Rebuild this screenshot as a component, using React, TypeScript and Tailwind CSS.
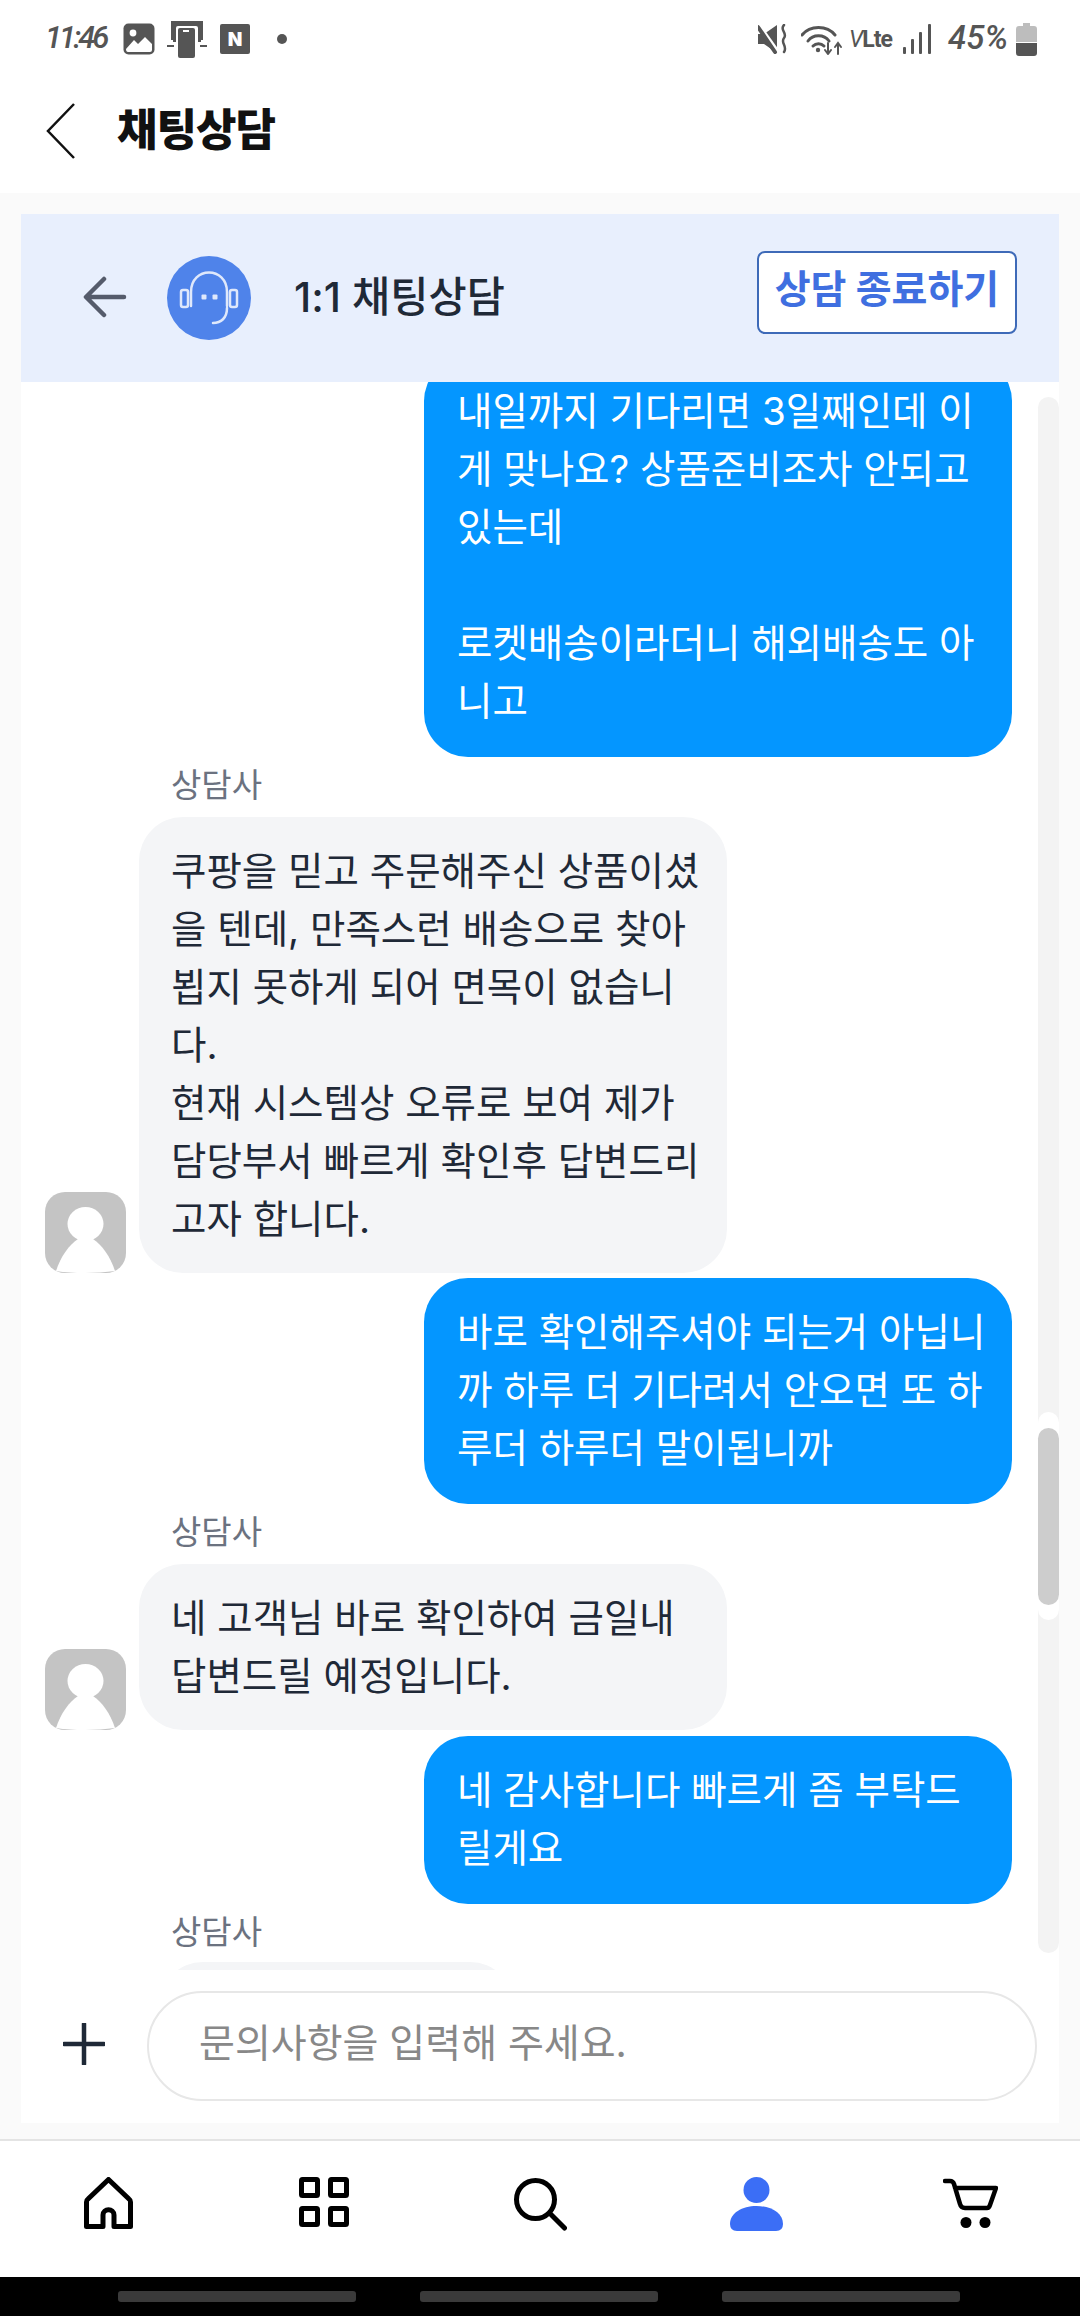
import { ReactNode } from 'react';

function ImageIcon() {
  return (
    <svg width="32" height="32" viewBox="0 0 32 32">
      <rect x="0.5" y="0.5" width="31" height="31" rx="5" fill="#555" />
      <circle cx="10" cy="10" r="3.4" fill="#fff" />
      <path d="M3 26 L11 17 L15 21 L22 14 L29 21 L29 27 Q29 29 27 29 L5 29 Q3 29 3 26Z" fill="#fff" />
    </svg>
  );
}

function DeviceIcon() {
  return (
    <svg width="40" height="37" viewBox="0 0 40 37">
      <path d="M4 0 H36 V19 H34 V21 H6 V19 H4Z" fill="#555" />
      <path d="M0 24 H7 V26 H0Z M33 24 H40 V26 H33Z" fill="#555" />
      <rect x="9" y="5" width="22" height="32" rx="2" fill="#fff" />
      <rect x="11" y="7" width="17" height="30" rx="2" fill="#555" />
      <rect x="16" y="9" width="6" height="2" fill="#fff" />
    </svg>
  );
}

function NIcon() {
  return (
    <div className="w-[30px] h-[30px] rounded-[2px] bg-[#555] flex items-center justify-center text-white text-[19px] leading-none font-black">
      N
    </div>
  );
}

function MuteIcon() {
  return (
    <svg width="30" height="30" viewBox="0 0 30 30">
      <path d="M0 10 H6 L19 1 V29 L6 20 H0Z" fill="#555" />
      <path d="M0 1 L20 29" stroke="#fff" strokeWidth="5" />
      <path d="M0 3 L17 28" stroke="#555" strokeWidth="4" strokeLinecap="round" />
      <path d="M26 1 C21 6 30 9 26 14 C22 19 30 22 26 28" fill="none" stroke="#555" strokeWidth="2.5" strokeLinecap="round" />
    </svg>
  );
}

function WifiIcon() {
  return (
    <svg width="42" height="31" viewBox="0 0 42 31">
      <g fill="none" stroke="#555" strokeWidth="3" strokeLinecap="round">
        <path d="M1 11 C9 1 26 1 34 11" />
        <path d="M7 17 C12 10 23 10 28 17" />
        <path d="M12 22 C15 19 20 19 23 22" />
      </g>
      <circle cx="17" cy="26" r="2.2" fill="#555" />
      <g fill="none" stroke="#555" strokeWidth="2" strokeLinecap="round">
        <path d="M27 19 V30 M24 26 L27 30 L30 26" />
        <path d="M37 30 V19 M34 23 L37 19 L40 23" />
      </g>
    </svg>
  );
}

function SignalIcon() {
  return (
    <svg width="28" height="30" viewBox="0 0 28 30">
      <g fill="#555">
        <rect x="0" y="23" width="3" height="7" rx="1" />
        <rect x="8" y="15" width="3" height="15" rx="1" />
        <rect x="16" y="8" width="3" height="22" rx="1" />
        <rect x="25" y="0" width="3" height="30" rx="1" />
      </g>
    </svg>
  );
}

function BatteryIcon() {
  return (
    <svg width="21" height="33" viewBox="0 0 21 33">
      <path d="M7 0 H14 V3 H18 Q21 3 21 6 V19 H0 V6 Q0 3 3 3 H7Z" fill="#bdbdbd" />
      <path d="M0 20 H21 V30 Q21 33 18 33 H3 Q0 33 0 30Z" fill="#555" />
    </svg>
  );
}

function HeadsetAvatar() {
  return (
    <svg width="84" height="84" viewBox="0 0 84 84">
      <circle cx="42" cy="42" r="42" fill="#4f83ea" />
      <g fill="none" stroke="#dfe8fb" strokeWidth="2.5" strokeLinecap="round">
        <path d="M24 50 V36 C24 10 60 10 60 36 V50" />
        <rect x="14" y="34" width="7" height="17" rx="2" />
        <rect x="63" y="34" width="7" height="17" rx="2" />
        <path d="M60 52 C60 62 54 67 46 67" />
      </g>
      <rect x="34.5" y="38.5" width="5" height="5" rx="1" fill="#dfe8fb" />
      <rect x="45.5" y="38.5" width="5" height="5" rx="1" fill="#dfe8fb" />
    </svg>
  );
}

function AgentAvatar() {
  return (
    <svg width="81" height="81" viewBox="0 0 81 81" className="shrink-0">
      <rect width="81" height="81" rx="20" fill="#c4c4c4" />
      <ellipse cx="40.5" cy="32" rx="18" ry="17" fill="#fff" />
      <path d="M11 79 C16 64 24 53 33 47 H48 C57 53 65 64 70 79 Q56 81 40 81 Q24 81 11 79Z" fill="#fff" />
    </svg>
  );
}

function UserBubble({ lines }: { lines: string[] }) {
  return (
    <div className="self-end w-[588px] mr-[47px] rounded-[44px] bg-[#0496ff] pl-[33px] pt-[25px] pb-[27px] text-white">
      {lines.map((l, i) => (
        <div key={i} className="h-[58px] whitespace-nowrap">{l}</div>
      ))}
    </div>
  );
}

function AgentRow({ lines }: { lines: string[] }) {
  return (
    <div className="flex items-end gap-[13px] pl-[24px]">
      <AgentAvatar />
      <div className="w-[588px] rounded-[44px] bg-[#f4f5f7] px-[32px] py-[25px] text-[#1f2937]">
        {lines.map((l, i) => (
          <div key={i} className="h-[58px] whitespace-nowrap">{l}</div>
        ))}
      </div>
    </div>
  );
}

function AgentLabel() {
  return <div className="h-[60px] pl-[150px] pt-[8px] text-[33px] leading-[40px] text-[#6b7280]">상담사</div>;
}

function NavSlot({ children }: { children: ReactNode }) {
  return <div className="flex items-center justify-center">{children}</div>;
}

export default function App() {
  return (
    <div className="w-[1080px] h-[2316px] flex flex-col bg-white overflow-hidden font-['Inter','Noto_Sans_CJK_KR',sans-serif]">
      {/* status bar */}
      <div className="h-[76px] shrink-0 flex items-center pl-[45px] pr-[43px] pt-[2px] text-[#555]">
        <span className="w-[78px] -mt-[4px] text-[31px] leading-none italic font-medium tracking-[-3px] font-['Roboto',sans-serif]">11:46</span>
        <ImageIcon />
        <div className="ml-[12px]"><DeviceIcon /></div>
        <div className="ml-[13px]"><NIcon /></div>
        <div className="ml-[27px] w-[10px] h-[10px] rounded-full bg-[#555]" />
        <div className="ml-auto flex items-center">
          <MuteIcon />
          <div className="ml-[13px]"><WifiIcon /></div>
          <span className="ml-[6px] w-[46px] text-[23px] leading-none font-bold whitespace-nowrap tracking-[-1px] font-['Roboto',sans-serif]"><i className="font-normal">V</i>Lte</span>
          <div className="ml-[8px]"><SignalIcon /></div>
          <span className="ml-[17px] w-[68px] -mt-[4px] text-[33px] leading-none italic font-medium font-['Roboto',sans-serif]">45%</span>
          <BatteryIcon />
        </div>
      </div>

      {/* page header */}
      <div className="h-[117px] shrink-0 flex items-center pl-[46px]">
        <svg width="30" height="56" viewBox="0 0 30 56" className="-mt-[8px]">
          <path d="M28 1 L2 28 L28 55" fill="none" stroke="#111" strokeWidth="2.5" />
        </svg>
        <h1 className="ml-[41px] -mt-[10px] text-[44px] leading-none font-black text-[#111] tracking-[-1px]">채팅상담</h1>
      </div>

      {/* content */}
      <div className="flex-1 min-h-0 flex flex-col bg-[#fafafa] pl-[21px] pr-[21px] pt-[21px] pb-[16px]">
        <div className="h-[168px] shrink-0 bg-[#e8effd] flex items-center pl-[62px] pr-[42px]">
          <svg width="44" height="44" viewBox="0 0 44 44">
            <path d="M41 21 H4 M21 3 L3 21 L21 39" fill="none" stroke="#555b6b" strokeWidth="4.5" strokeLinecap="round" strokeLinejoin="round" />
          </svg>
          <div className="ml-[40px]"><HeadsetAvatar /></div>
          <span className="ml-[43px] text-[41.5px] font-medium leading-none text-[#1f2937] whitespace-nowrap">1:1 채팅상담</span>
          <div className="ml-auto -mt-[11px] w-[260px] h-[83px] rounded-[8px] border-2 border-[#3e6ab8] bg-white flex items-center justify-center pb-[6px] text-[39px] font-bold text-[#3f6fe0] whitespace-nowrap">
            상담 종료하기
          </div>
        </div>

        <div className="flex-1 min-h-0 flex flex-col bg-white">
          {/* messages */}
          <div className="relative h-[1588px] shrink-0 overflow-hidden text-[38.5px] leading-[58px]">
            <div className="flex flex-col -mt-[25px]">
              <UserBubble lines={['내일까지 기다리면 3일째인데 이', '게 맞나요? 상품준비조차 안되고', '있는데', '', '로켓배송이라더니 해외배송도 아', '니고']} />
              <AgentLabel />
              <AgentRow lines={['쿠팡을 믿고 주문해주신 상품이셨', '을 텐데, 만족스런 배송으로 찾아', '뵙지 못하게 되어 면목이 없습니', '다.', '현재 시스템상 오류로 보여 제가', '담당부서 빠르게 확인후 답변드리', '고자 합니다.']} />
              <div className="h-[5px]" />
              <UserBubble lines={['바로 확인해주셔야 되는거 아닙니', '까 하루 더 기다려서 안오면 또 하', '루더 하루더 말이됩니까']} />
              <AgentLabel />
              <AgentRow lines={['네 고객님 바로 확인하여 금일내', '답변드릴 예정입니다.']} />
              <div className="h-[6px]" />
              <UserBubble lines={['네 감사합니다 빠르게 좀 부탁드', '릴게요']} />
              <AgentLabel />
              <div className="ml-[138px] w-[355px] h-[100px] -mt-[2px] rounded-[44px] bg-[#f4f5f7]" />
            </div>
            {/* scrollbar */}
            <div className="absolute right-0 top-[15px] bottom-[17px] w-[21px] rounded-full bg-[#f3f3f3]" />
            <div className="absolute right-0 top-[1030px] h-[208px] w-[21px] rounded-full bg-white" />
            <div className="absolute right-0 top-[1046px] h-[177px] w-[21px] rounded-full bg-[#cdcdcd]" />
          </div>

          {/* composer */}
          <div className="flex-1 flex items-start pt-[21px] pl-[42px]">
            <svg width="42" height="42" viewBox="0 0 42 42" className="mt-[32px]">
              <path d="M21 1 V41 M1 21 H41" stroke="#1f2937" strokeWidth="4.5" strokeLinecap="round" />
            </svg>
            <div className="ml-[42px] w-[890px] h-[110px] rounded-full border-2 border-[#e7e7e7] bg-white flex items-center pl-[50px] pb-[6px] text-[39px] text-[#888] whitespace-nowrap">
              문의사항을 입력해 주세요.
            </div>
          </div>
        </div>
      </div>

      {/* bottom nav */}
      <div className="h-[138px] shrink-0 grid grid-cols-[216px_216px_216px_216px_216px] border-t-2 border-[#e4e4e4] pt-[36px] items-start">
        <NavSlot>
          <svg width="49" height="52" viewBox="0 0 49 52">
            <path d="M19 49.5 H2.5 V25 Q2.5 23 4 22 L24.5 2.5 L45 22 Q46.5 23 46.5 25 V49.5 H30 V38 C30 31 19 31 19 38Z" fill="none" stroke="#000" strokeWidth="5" strokeLinejoin="round" />
          </svg>
        </NavSlot>
        <NavSlot>
          <svg width="50" height="50" viewBox="0 0 50 50">
            <g fill="none" stroke="#000" strokeWidth="5">
              <rect x="2.5" y="2.5" width="16" height="16" rx="1" />
              <rect x="31.5" y="2.5" width="16" height="16" rx="1" />
              <rect x="2.5" y="31.5" width="16" height="16" rx="1" />
              <rect x="31.5" y="31.5" width="16" height="16" rx="1" />
            </g>
          </svg>
        </NavSlot>
        <NavSlot>
          <svg width="53" height="53" viewBox="0 0 53 53" className="mt-[1px]">
            <circle cx="21.5" cy="21.5" r="19" fill="none" stroke="#000" strokeWidth="5" />
            <path d="M37 36.5 L50.5 50" stroke="#000" strokeWidth="5" strokeLinecap="round" />
          </svg>
        </NavSlot>
        <NavSlot>
          <svg width="53" height="54" viewBox="0 0 53 54">
            <circle cx="26.5" cy="13" r="13" fill="#3b6ef6" />
            <path d="M7 54 Q0 54 0 47 C0 36 12 29 26.5 29 C41 29 53 36 53 47 Q53 54 46 54Z" fill="#3b6ef6" />
          </svg>
        </NavSlot>
        <NavSlot>
          <svg width="55" height="50" viewBox="0 0 55 50" className="-ml-[3px] mt-[1px]">
            <path d="M2 3 H7 Q10 3 11 6 L17 26 Q18 30 22 30 H44 Q46 30 47 27 L53 10 H12" fill="none" stroke="#000" strokeWidth="4.5" strokeLinecap="round" strokeLinejoin="round" />
            <circle cx="23" cy="44.5" r="5.5" fill="#000" />
            <circle cx="42" cy="44.5" r="5.5" fill="#000" />
          </svg>
        </NavSlot>
      </div>

      {/* system nav */}
      <div className="h-[39px] shrink-0 bg-black flex items-start pt-[14px] pl-[118px] gap-[64px]">
        <div className="w-[238px] h-[11px] rounded-[3px] bg-[#3a3a3a]" />
        <div className="w-[238px] h-[11px] rounded-[3px] bg-[#3a3a3a]" />
        <div className="w-[238px] h-[11px] rounded-[3px] bg-[#3a3a3a]" />
      </div>
    </div>
  );
}
